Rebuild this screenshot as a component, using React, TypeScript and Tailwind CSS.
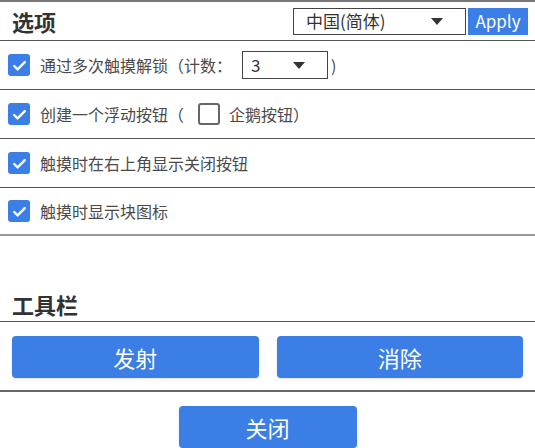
import React from "react";

const font = { fontFamily: '"Noto Sans CJK SC", "Noto Sans", sans-serif' };

function Check({ checked }: { checked: boolean }) {
  if (!checked) {
    return (
      <div className="w-[22px] h-[22px] rounded-[3px] border-2 border-[#666] bg-white shrink-0" />
    );
  }
  return (
    <div className="w-[22px] h-[22px] rounded-[3px] bg-[#3b7fe6] flex items-center justify-center shrink-0">
      <svg width="17" height="17" viewBox="0 0 16 16" fill="none">
        <path d="M3 8.5l3.2 3.2L13 4.8" stroke="white" strokeWidth="2.2" strokeLinecap="round" strokeLinejoin="round" />
      </svg>
    </div>
  );
}

function Arrow() {
  return (
    <svg width="12" height="7" viewBox="0 0 12 7">
      <path d="M0 0h12L6 7z" fill="#333" />
    </svg>
  );
}

function Row({ children, last }: { children: React.ReactNode; last?: boolean }) {
  return (
    <div
      className={
        "flex items-center pl-[8px] gap-[10px] text-[16px] text-[#4a4a4a] " +
        (last ? "h-[48px] border-b-2 border-[#999]" : "h-[49px] border-b border-[#555]")
      }
    >
      {children}
    </div>
  );
}

export default function App() {
  return (
    <div className="w-[535px] h-[448px] bg-white overflow-hidden" style={font}>
      <div className="border-t-2 border-[#777]" />
      <div className="h-[39px] flex items-center justify-between pl-[12px] pr-[7px] border-b border-[#555]">
        <div className="text-[22px] font-bold text-[#333] leading-none">选项</div>
        <div className="flex items-center gap-[2px]">
          <div className="w-[173px] h-[27px] border border-[#444] flex items-center justify-between pl-[12px] pr-[22px] text-[17px] text-[#333]">
            <span>中国(简体)</span>
            <Arrow />
          </div>
          <div className="w-[60px] h-[27px] bg-[#3b7fe6] text-white text-[17px] flex items-center justify-center">
            Apply
          </div>
        </div>
      </div>
      <Row>
        <Check checked />
        <span>通过多次触摸解锁（计数：</span>
        <div className="w-[86px] h-[28px] border border-[#444] flex items-center justify-between pl-[8px] pr-[22px] text-[17px] text-[#333]">
          <span>3</span>
          <Arrow />
        </div>
        <span className="-ml-[7px]">)</span>
      </Row>
      <Row>
        <Check checked />
        <span>创建一个浮动按钮（</span>
        <div className="ml-[4px] flex items-center gap-[9px]">
          <Check checked={false} />
          <span>企鹅按钮）</span>
        </div>
      </Row>
      <Row>
        <Check checked />
        <span>触摸时在右上角显示关闭按钮</span>
      </Row>
      <Row last>
        <Check checked />
        <span>触摸时显示块图标</span>
      </Row>
      <div className="h-[52px]" />
      <div className="h-[34px] flex items-end pb-[6px] pl-[12px] border-b border-[#555]">
        <div className="text-[22px] font-bold text-[#333] leading-none">工具栏</div>
      </div>
      <div className="h-[70px] flex items-start pt-[14px] px-[12px] gap-[18px] border-b-2 border-[#666]">
        <button className="flex-1 h-[42px] rounded-[4px] bg-[#3a7ee6] text-white text-[22px] shadow-sm">发射</button>
        <button className="flex-1 h-[42px] rounded-[4px] bg-[#3a7ee6] text-white text-[22px] shadow-sm">消除</button>
      </div>
      <div className="flex justify-center pt-[14px]">
        <button className="w-[178px] h-[42px] rounded-[4px] bg-[#3a7ee6] text-white text-[22px] shadow-sm">关闭</button>
      </div>
    </div>
  );
}
